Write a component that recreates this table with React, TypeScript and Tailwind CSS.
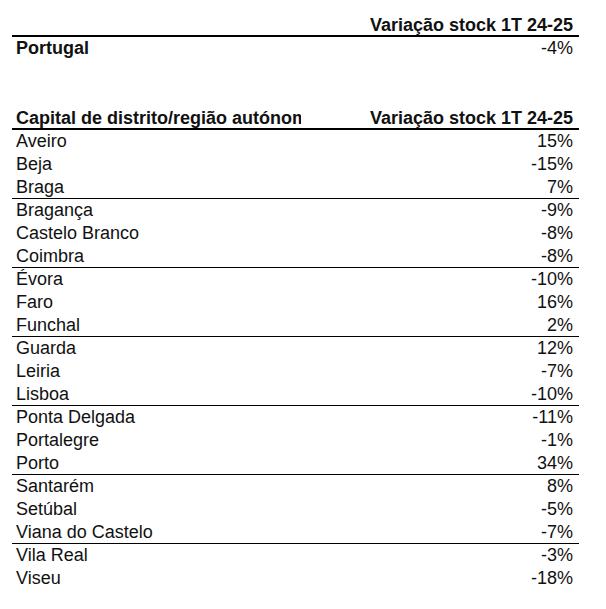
const rows: [string, string][] = [
  ["Aveiro", "15%"],
  ["Beja", "-15%"],
  ["Braga", "7%"],
  ["Bragança", "-9%"],
  ["Castelo Branco", "-8%"],
  ["Coimbra", "-8%"],
  ["Évora", "-10%"],
  ["Faro", "16%"],
  ["Funchal", "2%"],
  ["Guarda", "12%"],
  ["Leiria", "-7%"],
  ["Lisboa", "-10%"],
  ["Ponta Delgada", "-11%"],
  ["Portalegre", "-1%"],
  ["Porto", "34%"],
  ["Santarém", "8%"],
  ["Setúbal", "-5%"],
  ["Viana do Castelo", "-7%"],
  ["Vila Real", "-3%"],
  ["Viseu", "-18%"],
];

function Row({
  label,
  value,
  bold = false,
  boldLabel = false,
  border = "",
}: {
  label: string;
  value: string;
  bold?: boolean;
  boldLabel?: boolean;
  border?: string;
}) {
  return (
    <div className={`flex h-[23px] items-start pt-[1px] ${border}`}>
      <div
        className={`w-[289px] overflow-hidden whitespace-nowrap pl-[4px] leading-[21px] ${
          bold || boldLabel ? "font-bold" : ""
        }`}
      >
        {label}
      </div>
      <div className={`flex-1 pr-[6px] text-right leading-[21px] ${bold ? "font-bold" : ""}`}>
        {value}
      </div>
    </div>
  );
}

export default function App() {
  return (
    <div
      className="min-h-[609px] w-[606px] bg-white pt-[14px] text-[18px] text-[#111]"
      style={{ fontFamily: '"Liberation Sans", Arial, sans-serif' }}
    >
      <div className="ml-[12px] w-[567px]">
        <Row label="" value="Variação stock 1T 24-25" bold border="border-b-2 border-black" />
        <Row label="Portugal" value="-4%" boldLabel />
        <div className="h-[47px]" />
        <Row
          label="Capital de distrito/região autónoma"
          value="Variação stock 1T 24-25"
          bold
          border="border-b-2 border-black"
        />
        {rows.map(([label, value], i) => (
          <Row
            key={label}
            label={label}
            value={value}
            border={i % 3 === 2 && i < 18 ? "border-b border-black" : ""}
          />
        ))}
      </div>
    </div>
  );
}
